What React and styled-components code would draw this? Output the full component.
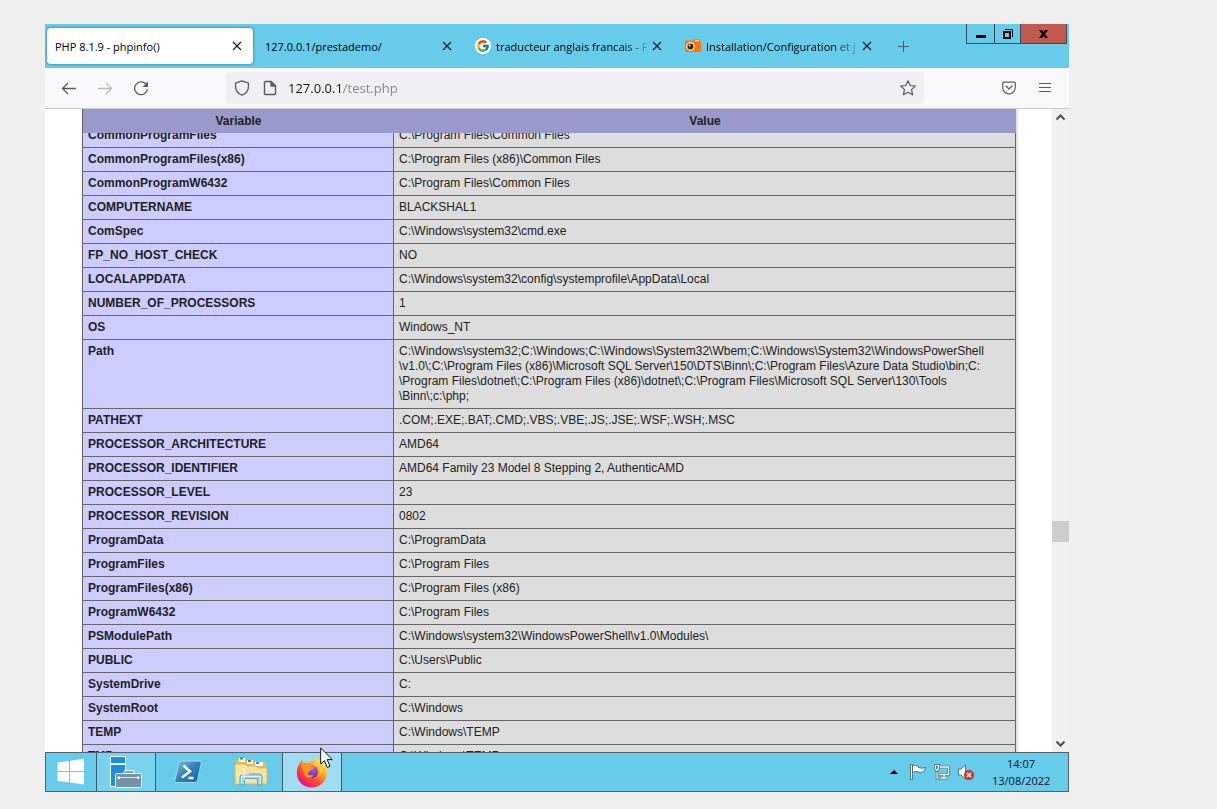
import React from "react"
import styled, { createGlobalStyle } from 'styled-components'
import { FcGoogle } from 'react-icons/fc';


const GlobalStyle = createGlobalStyle`
    * { box-sizing:border-box; }
    body {
        margin:0;
        background:#efefef;
        font-family:"Open Sans", "Noto Sans", sans-serif;
        font-size:11px;
        color:#15141a;
    }
    button {
        border:0;
        padding:0;
        background:none;
        font:inherit;
        color:inherit;
        display:flex;
        align-items:center;
        justify-content:center;
    }
`

const Page = styled.div`
    height:100vh;
    padding:24px 148px 17px 45px;
`
const Screen = styled.div`
    display:flex;
    flex-direction:column;
    height:100%;
`

/* title bar */

const TitleBar = styled.header`
    display:flex;
    align-items:flex-start;
    justify-content:space-between;
    height:44px;
    flex-shrink:0;
    background:#67cbea;
`
const TabStrip = styled.div`
    display:flex;
    gap:4px;
    padding:4px 2px;
    min-width:0;
`
const Tab = styled.div`
    display:flex;
    align-items:center;
    width:206px;
    height:36px;
    padding:0 8px;
    border-radius:4px;
    background:${props => props.$active ? "#fff" : "transparent"};
    box-shadow:${props => props.$active ? "0 0 3px rgba(0,40,70,0.6)" : "none"};
`
const TabTitle = styled.button`
    flex:1;
    gap:5px;
    height:100%;
    min-width:0;
    justify-content:flex-start;
    color:#000;
    white-space:nowrap;
    overflow:hidden;
    mask-image:${props => props.$fade ? "linear-gradient(90deg, #000 148px, transparent 178px)" : "none"};
    svg { flex-shrink:0; }
`
const TabClose = styled.button`
    width:16px;
    height:16px;
    flex-shrink:0;
`
const NewTab = styled.button`
    width:32px;
    height:36px;
`
const Favicon = styled.span`
    display:flex;
    flex-shrink:0;
    padding:1px;
    border-radius:50%;
    background:#fff;
`
const WindowControls = styled.div`
    display:flex;
    margin-right:2px;
    border:1px solid #3b4b53;
    border-top:0;
`
const WindowButton = styled.button`
    width:${props => props.$width};
    height:19px;
    background:${props => props.$bg || "transparent"};
    & + & { border-left:1px solid #3b4b53; }
`

/* navigation bar */

const NavBar = styled.nav`
    display:flex;
    align-items:center;
    height:41px;
    flex-shrink:0;
    padding:0 6px;
    background:#f9f9fb;
    border-bottom:1px solid #ccccd0;
`
const NavButton = styled.button`
    width:36px;
    height:32px;
    color:#5b5b66;
    opacity:${props => props.disabled ? 0.4 : 1};
`
const UrlBar = styled.div`
    display:flex;
    align-items:center;
    flex:1;
    height:32px;
    margin:0 67px;
    padding:0 8px;
    gap:12px;
    border-radius:4px;
    background:#f0eff4;
    color:#5b5b66;
    svg { display:block; }
`
const UrlInput = styled.input`
    flex:1;
    min-width:0;
    height:24px;
    margin-left:-2px;
    padding:0;
    border:0;
    outline:0;
    font:13px "Open Sans", "Noto Sans", sans-serif;
    color:transparent;
    background:linear-gradient(90deg, #15141a 55px, #85858c 55px);
    background-clip:text;
    -webkit-background-clip:text;
`

/* web page */

const Viewport = styled.div`
    display:flex;
    flex:1;
    min-height:0;
    background:#fff;
`
const Content = styled.main`
    flex:1;
    min-width:0;
    overflow:hidden;
    padding:0 36px 0 37px;
`
const InfoTable = styled.table`
    width:100%;
    max-width:934px;
    margin:-9px auto 0;
    table-layout:fixed;
    border-collapse:separate;
    border-spacing:0;
    box-shadow:1px 2px 3px #ccc;
    font:12px/15px "Liberation Sans", Arial, sans-serif;
    color:#222;
`
const HeadCell = styled.th`
    position:sticky;
    top:0;
    height:24px;
    width:${props => props.$width || "auto"};
    padding:4px 5px;
    background:#9999cc;
    &:first-child { border-left:1px solid #666; }
`
const NameCell = styled.th`
    padding:4px 5px;
    vertical-align:top;
    text-align:left;
    background:#ccccff;
    border:1px solid #666;
    border-top:0;
`
const ValueCell = styled.td`
    padding:4px 5px;
    white-space:pre;
    background:#ddd;
    border:1px solid #666;
    border-width:0 1px 1px 0;
`
const ScrollBar = styled.div`
    display:flex;
    flex-direction:column;
    width:17px;
    background:#f0f0f0;
`
const ScrollButton = styled.button`
    width:17px;
    height:17px;
`
const ScrollSpace = styled.div`
    flex:${props => props.$grow};
`
const ScrollThumb = styled.div`
    height:21px;
    background:#cdcdcd;
`

/* task bar */

const TaskBar = styled.footer`
    display:flex;
    height:40px;
    flex-shrink:0;
    background:#67cbea;
    border:1px solid #53636b;
`
const TaskButton = styled.button`
    position:relative;
    width:${props => props.$width};
    background:${props => props.$bg || "transparent"};
    border:0 solid #3b5966;
    border-width:${props => props.$bg ? "0 1px" : "0"};
`
const Pointer = styled.svg`
    position:absolute;
    left:37px;
    top:-6px;
    z-index:2;
`
const Tray = styled.div`
    display:flex;
    align-items:center;
    gap:8px;
    margin-left:auto;
    padding-right:18px;
`
const TrayButton = styled.button`
    width:16px;
    height:16px;
`
const Clock = styled.time`
    margin-left:10px;
    width:58px;
    text-align:center;
    line-height:17px;
    white-space:nowrap;
`


const Cross = () => (
    <svg width="10" height="10" viewBox="0 0 10 10" stroke="currentColor" strokeWidth="1.1">
        <path d="M1 1l8 8M9 1l-8 8" />
    </svg>
)

const PhotoIcon = () => (
    <svg width="16" height="14" viewBox="0 0 16 14">
        <path d="M0 3Q0 1.500 1.500 1.500H8.500L9.500 .3H14.500V1.500Q16 1.500 16 3V11.500Q16 13 14.500 13H1.500Q0 13 0 11.500Z" fill="#ff7700" />
        <path d="M10 1.800h4" stroke="#ffe0bd" />
        <circle cx="5.500" cy="7.500" r="4.200" fill="#fff" />
        <circle cx="5.500" cy="7.500" r="3.100" fill="#332a26" />
        <circle cx="4.600" cy="6.500" r="1" fill="#d8e5f0" />
    </svg>
)

const WindowsLogo = () => (
    <svg width="28" height="28" viewBox="0 0 28 28" fill="#fff">
        <path d="M.5 4.500L12 3V13H.5ZM13 2.800L27 .8V13H13ZM.5 14H12V24.500L.5 23ZM13 14H27V26.500L13 24.600Z" />
    </svg>
)

const ServerManager = () => (
    <svg width="34" height="34" viewBox="0 0 34 34">
        <path d="M1.500 1.500H16.500V8.500H1.500ZM1.500 9.500H16.500V31.500H1.500Z" fill="#1f8fdc" stroke="#e5f5fc" />
        <path d="M16 19V17.500Q16 16.500 17 16.500H23Q24 16.500 24 17.500V19" fill="none" stroke="#eef6fa" strokeWidth="3" />
        <path d="M16 19V17.500Q16 17 17 17H23Q24 17 24 17.500V19" fill="none" stroke="#6b8ba3" strokeWidth="1.500" />
        <rect x="6.500" y="18.500" width="26" height="14" rx="1" fill="#7293aa" stroke="#eef6fa" />
        <path d="M8 22.500H31" stroke="#dce8ef" />
        <path d="M10 21.500v2.500M29 21.500v2.500" stroke="#fff" strokeWidth="2" />
    </svg>
)

const PowerShell = () => (
    <svg width="28" height="24" viewBox="0 0 28 24">
        <defs>
            <linearGradient id="ps" x1="0" y1="0" x2="1" y2="1">
                <stop offset="0" stopColor="#8cc4e2" />
                <stop offset="0.500" stopColor="#2f80ba" />
                <stop offset="1" stopColor="#1a62a6" />
            </linearGradient>
        </defs>
        <path d="M6.500 1H26Q27.800 1 27.300 3L23.500 20.500Q23 22.500 21 22.500H2Q.3 22.500 .8 20.500L4.700 3Q5.200 1 6.500 1Z" fill="url(#ps)" stroke="#a0daf0" />
        <path d="M9.500 5.500L16 11.500L8 17.500M14.500 18H19.500" fill="none" stroke="#fff" strokeWidth="2.400" />
    </svg>
)

const Explorer = () => (
    <svg width="34" height="32" viewBox="0 0 34 32">
        <path d="M2 5Q2 3 4 3H10L12 5H31Q32 5 32 6V26H2Z" fill="#e1bb5c" />
        <path d="M5 2h6v4H5zM13 4h6v4h-6zM21 6h8v4h-8z" fill="#fffbe8" />
        <path d="M6 1.500h3v2H6z" fill="#0bae35" />
        <path d="M14 4h3v2h-3z" fill="#e3442c" />
        <path d="M22 6h3v2h-3z" fill="#1b8ff0" />
        <path d="M1 8H11L13 10H22L24 12H33V27Q33 28 32 28H2Q1 28 1 27Z" fill="#f8e39a" stroke="#d6b158" strokeWidth=".8" />
        <path d="M6 29V21Q6 18 9 18H25Q28 18 28 21V29H23.500V22.500H10.500V29Z" fill="#9bd3ed" stroke="#4c9ac7" strokeWidth=".8" />
        <path d="M7.500 28V20.500H26.500V28" stroke="#e1f5ff" fill="none" />
        <path d="M10 12V24M5 18H15" stroke="#fff" strokeWidth="1" opacity=".8" />
    </svg>
)

const Firefox = () => (
    <svg width="32" height="32" viewBox="0 0 32 32">
        <defs>
            <linearGradient id="fx" x1=".85" y1=".1" x2=".2" y2=".9">
                <stop offset="0" stopColor="#fff44f" />
                <stop offset="0.350" stopColor="#ffa41f" />
                <stop offset="0.650" stopColor="#ff4938" />
                <stop offset="1" stopColor="#eb1570" />
            </linearGradient>
            <radialGradient id="globe" cx=".6" cy=".3" r=".8">
                <stop offset="0" stopColor="#a94fe8" />
                <stop offset="1" stopColor="#49369f" />
            </radialGradient>
        </defs>
        <path d="M20.500 .5C21 4 25 6 26 9C27 8.500 27 7 27 6C31 10 32 17 29.500 23C26.500 29 21 31.500 15.500 31.500C7 31.500 .8 25 .8 16.500C.8 12 2.500 9 4 7C4.300 5.500 5 4.500 6 3.500C6 5 6.800 6 7.500 7C9 6.600 10.500 6.700 12 7.200C14 5 15 5 17 5C18.500 4 19.500 2.500 20.500 .5Z" fill="url(#fx)" />
        <circle cx="16" cy="16" r="6" fill="url(#globe)" />
        <path d="M5 8C8 6.500 12 7 14 10.500C16 10.500 17.500 10.500 18.500 11.500C17.500 13.500 15 13.500 14 14.500C13.500 16 12 16.500 12 18.500C13.500 20 15.500 18.500 17.500 19.500C15 23.500 8 22 7.500 16C6 13 5 11 5 8Z" fill="#ff9420" />
        <path d="M18 8C24 9 26 15 23 20C29 15 25 7 20 5Z" fill="#ffcf35" />
    </svg>
)


const TABS = [
    { title: "PHP 8.1.9 - phpinfo()", active: true },
    { title: "127.0.0.1/prestademo/" },
    { title: "traducteur anglais francais - F", icon: <Favicon><FcGoogle size={14} /></Favicon>, fade: true },
    { title: "Installation/Configuration et j", icon: <PhotoIcon />, fade: true },
]

const ROWS = [
    ["CommonProgramFiles", "C:\\Program Files\\Common Files"],
    ["CommonProgramFiles(x86)", "C:\\Program Files (x86)\\Common Files"],
    ["CommonProgramW6432", "C:\\Program Files\\Common Files"],
    ["COMPUTERNAME", "BLACKSHAL1"],
    ["ComSpec", "C:\\Windows\\system32\\cmd.exe"],
    ["FP_NO_HOST_CHECK", "NO"],
    ["LOCALAPPDATA", "C:\\Windows\\system32\\config\\systemprofile\\AppData\\Local"],
    ["NUMBER_OF_PROCESSORS", "1"],
    ["OS", "Windows_NT"],
    ["Path", [
        "C:\\Windows\\system32;C:\\Windows;C:\\Windows\\System32\\Wbem;C:\\Windows\\System32\\WindowsPowerShell",
        "\\v1.0\\;C:\\Program Files (x86)\\Microsoft SQL Server\\150\\DTS\\Binn\\;C:\\Program Files\\Azure Data Studio\\bin;C:",
        "\\Program Files\\dotnet\\;C:\\Program Files (x86)\\dotnet\\;C:\\Program Files\\Microsoft SQL Server\\130\\Tools",
        "\\Binn\\;c:\\php;",
    ].join("\n")],
    ["PATHEXT", ".COM;.EXE;.BAT;.CMD;.VBS;.VBE;.JS;.JSE;.WSF;.WSH;.MSC"],
    ["PROCESSOR_ARCHITECTURE", "AMD64"],
    ["PROCESSOR_IDENTIFIER", "AMD64 Family 23 Model 8 Stepping 2, AuthenticAMD"],
    ["PROCESSOR_LEVEL", "23"],
    ["PROCESSOR_REVISION", "0802"],
    ["ProgramData", "C:\\ProgramData"],
    ["ProgramFiles", "C:\\Program Files"],
    ["ProgramFiles(x86)", "C:\\Program Files (x86)"],
    ["ProgramW6432", "C:\\Program Files"],
    ["PSModulePath", "C:\\Windows\\system32\\WindowsPowerShell\\v1.0\\Modules\\"],
    ["PUBLIC", "C:\\Users\\Public"],
    ["SystemDrive", "C:"],
    ["SystemRoot", "C:\\Windows"],
    ["TEMP", "C:\\Windows\\TEMP"],
    ["TMP", "C:\\Windows\\TEMP"],
]


const Tabs = () => (
    <TitleBar>
        <TabStrip>
            {TABS.map(tab => (
                <Tab key={tab.title} $active={tab.active}>
                    <TabTitle $fade={tab.fade}>{tab.icon}{tab.title}</TabTitle>
                    <TabClose aria-label="Close tab"><Cross /></TabClose>
                </Tab>
            ))}
            <NewTab aria-label="New tab">
                <svg width="13" height="13" viewBox="0 0 13 13" stroke="#4c5b66"><path d="M6.500 1v11M1 6.500h11" /></svg>
            </NewTab>
        </TabStrip>
        <WindowControls>
            <WindowButton $width="27px" aria-label="Minimize">
                <svg width="10" height="12" viewBox="0 0 10 12"><path d="M0 7h10v3H0z" /></svg>
            </WindowButton>
            <WindowButton $width="26px" aria-label="Restore">
                <svg width="10" height="10" viewBox="0 0 10 10" fill="none" stroke="#000">
                    <path d="M2 .5H9.500V8" />
                    <rect x="1" y="3" width="6" height="6" strokeWidth="2" />
                </svg>
            </WindowButton>
            <WindowButton $width="46px" $bg="#c35a50" aria-label="Close">
                <svg width="9" height="8" viewBox="0 0 9 8"><path d="M0 0H3L4.500 2L6 0H9L6 4L9 8H6L4.500 6L3 8H0L3 4Z" /></svg>
            </WindowButton>
        </WindowControls>
    </TitleBar>
)

const Navigation = () => (
    <NavBar>
        <NavButton aria-label="Back">
            <svg width="16" height="16" viewBox="0 0 16 16" fill="none" stroke="currentColor" strokeWidth="1.300"><path d="M15 8.500H1.500M7 3L1.500 8.500L7 14" /></svg>
        </NavButton>
        <NavButton aria-label="Forward" disabled>
            <svg width="16" height="16" viewBox="0 0 16 16" fill="none" stroke="currentColor" strokeWidth="1.300"><path d="M1 8.500H14.500M9 3L14.500 8.500L9 14" /></svg>
        </NavButton>
        <NavButton aria-label="Reload">
            <svg width="16" height="16" viewBox="0 0 16 16" fill="none" stroke="currentColor" strokeWidth="1.300">
                <path d="M12.800 4A6.400 6.400 0 1 0 14.400 9" />
                <path d="M15 1.500V7H9.500Z" fill="currentColor" stroke="none" />
            </svg>
        </NavButton>
        <UrlBar>
            <svg width="16" height="16" viewBox="0 0 16 16" fill="none" stroke="currentColor" strokeWidth="1.300" strokeLinejoin="round">
                <path d="M8 .8L14.500 3.200V6C14.500 10.500 12 13.800 8 15.200C4 13.800 1.500 10.500 1.500 6V3.200Z" />
            </svg>
            <svg width="16" height="16" viewBox="0 0 16 16" fill="none" stroke="currentColor" strokeWidth="1.400" strokeLinejoin="round">
                <path d="M3.500 1.500H9L13.500 6V13.500Q13.500 14.500 12.500 14.500H3.500Q2.500 14.500 2.500 13.500V2.500Q2.500 1.500 3.500 1.500Z" />
                <path d="M9 1.500V6H13.500Z" fill="currentColor" />
            </svg>
            <UrlInput aria-label="Address" defaultValue="127.0.0.1/test.php" />
            <svg width="16" height="16" viewBox="0 0 16 16" fill="none" stroke="currentColor" strokeWidth="1.200" strokeLinejoin="round">
                <path d="M8 .8L10.200 5.500L15.300 6.100L11.500 9.600L12.600 14.800L8 12.200L3.400 14.800L4.500 9.600L.7 6.100L5.800 5.500Z" />
            </svg>
        </UrlBar>
        <NavButton aria-label="Save to Pocket">
            <svg width="14" height="14" viewBox="0 0 14 14" fill="none" stroke="currentColor" strokeWidth="1.200" strokeLinecap="round" strokeLinejoin="round">
                <path d="M1.700 1.200H12.300Q13.300 1.200 13.300 2.200V6.500A6.300 6.300 0 0 1 .7 6.500V2.200Q.7 1.200 1.700 1.200Z" />
                <path d="M4 5L7 8L10 5" />
            </svg>
        </NavButton>
        <NavButton aria-label="Menu">
            <svg width="12" height="12" viewBox="0 0 12 12" stroke="currentColor" strokeWidth="1.200"><path d="M0 1.500H12M0 5.500H12M0 9.500H12" /></svg>
        </NavButton>
    </NavBar>
)

const PhpInfo = () => (
    <Viewport>
        <Content>
            <InfoTable>
                <thead>
                    <tr>
                        <HeadCell $width="312px">Variable</HeadCell>
                        <HeadCell>Value</HeadCell>
                    </tr>
                </thead>
                <tbody>
                    {ROWS.map(([name, value]) => (
                        <tr key={name}>
                            <NameCell scope="row">{name}</NameCell>
                            <ValueCell>{value}</ValueCell>
                        </tr>
                    ))}
                </tbody>
            </InfoTable>
        </Content>
        <ScrollBar>
            <ScrollButton aria-label="Scroll up">
                <svg width="9" height="8" viewBox="0 0 9 8" fill="none" stroke="#505050" strokeWidth="2"><path d="M.5 5.500L4.500 1.500L8.500 5.500" /></svg>
            </ScrollButton>
            <ScrollSpace $grow={395} />
            <ScrollThumb />
            <ScrollSpace $grow={193} />
            <ScrollButton aria-label="Scroll down">
                <svg width="9" height="6" viewBox="0 0 9 6" fill="none" stroke="#505050" strokeWidth="2"><path d="M.5 .5L4.500 4.500L8.500 .5" /></svg>
            </ScrollButton>
        </ScrollBar>
    </Viewport>
)

const Tasks = () => (
    <TaskBar>
        <TaskButton $width="50px" aria-label="Start"><WindowsLogo /></TaskButton>
        <TaskButton $width="60px" $bg="#7ad2ef" aria-label="Server Manager"><ServerManager /></TaskButton>
        <TaskButton $width="63px" aria-label="PowerShell"><PowerShell /></TaskButton>
        <TaskButton $width="63px" aria-label="File Explorer"><Explorer /></TaskButton>
        <TaskButton $width="60px" $bg="#a0ddf2" aria-label="Firefox">
            <Firefox />
            <Pointer width="13" height="22" viewBox="0 0 13 22">
                <path d="M.7 1V17L4.500 13.500L7.200 20.500L10 19.300L7.200 12.600H12.300Z" fill="#fff" stroke="#111" />
            </Pointer>
        </TaskButton>
        <Tray>
            <TrayButton aria-label="Show hidden icons">
                <svg width="8" height="4" viewBox="0 0 8 4"><path d="M4 0L8 4H0Z" /></svg>
            </TrayButton>
            <TrayButton aria-label="Action Center">
                <svg width="16" height="16" viewBox="0 0 16 16" fill="#fff" stroke="#3e5965" strokeWidth=".8">
                    <path d="M.5 .5H2.500V15.500H.5Z" />
                    <path d="M2.500 2Q6 .5 8.500 2.500V3.500Q11.500 5 15.500 3.500Q14 9.500 8 8.500V7.500Q5 7 2.500 8.500Z" />
                </svg>
            </TrayButton>
            <TrayButton aria-label="Network">
                <svg width="16" height="16" viewBox="0 0 16 16" fill="none">
                    <path d="M6 3H14.500V10.500H5.500M10 10.500V13.500M6 14H14" stroke="#3e5965" strokeWidth="2.600" />
                    <path d="M6 3H14.500V10.500H5.500M10 10.500V13.500M6.500 14H13.500" stroke="#fff" strokeWidth="1.400" />
                    <path d="M3 6V14H6" stroke="#3e5965" strokeWidth="2.400" />
                    <path d="M3 6V14H6" stroke="#fff" strokeWidth="1.200" />
                    <path d="M1.500 1.500H4.500V5L3 6.500L1.500 5Z" fill="#67cbea" stroke="#3e5965" strokeWidth="2.400" />
                    <path d="M1.500 1.500H4.500V5L3 6.500L1.500 5Z" stroke="#fff" strokeWidth="1.200" />
                </svg>
            </TrayButton>
            <TrayButton aria-label="Volume">
                <svg width="16" height="16" viewBox="0 0 16 16">
                    <path d="M.5 5H3L7.500 1V15L3 11H.5Z" fill="#fff" stroke="#3e5965" strokeWidth=".8" />
                    <circle cx="11" cy="11" r="4.800" fill="#dc3232" stroke="#a72323" strokeWidth=".5" />
                    <path d="M9 9l4 4M13 9l-4 4" stroke="#fff" strokeWidth="1.600" />
                </svg>
            </TrayButton>
            <Clock dateTime="2022-08-13T14:07">14:07<br />13/08/2022</Clock>
        </Tray>
    </TaskBar>
)

const App = () => (
    <Page>
        <GlobalStyle />
        <Screen>
            <Tabs />
            <Navigation />
            <PhpInfo />
            <Tasks />
        </Screen>
    </Page>
)

export default App
